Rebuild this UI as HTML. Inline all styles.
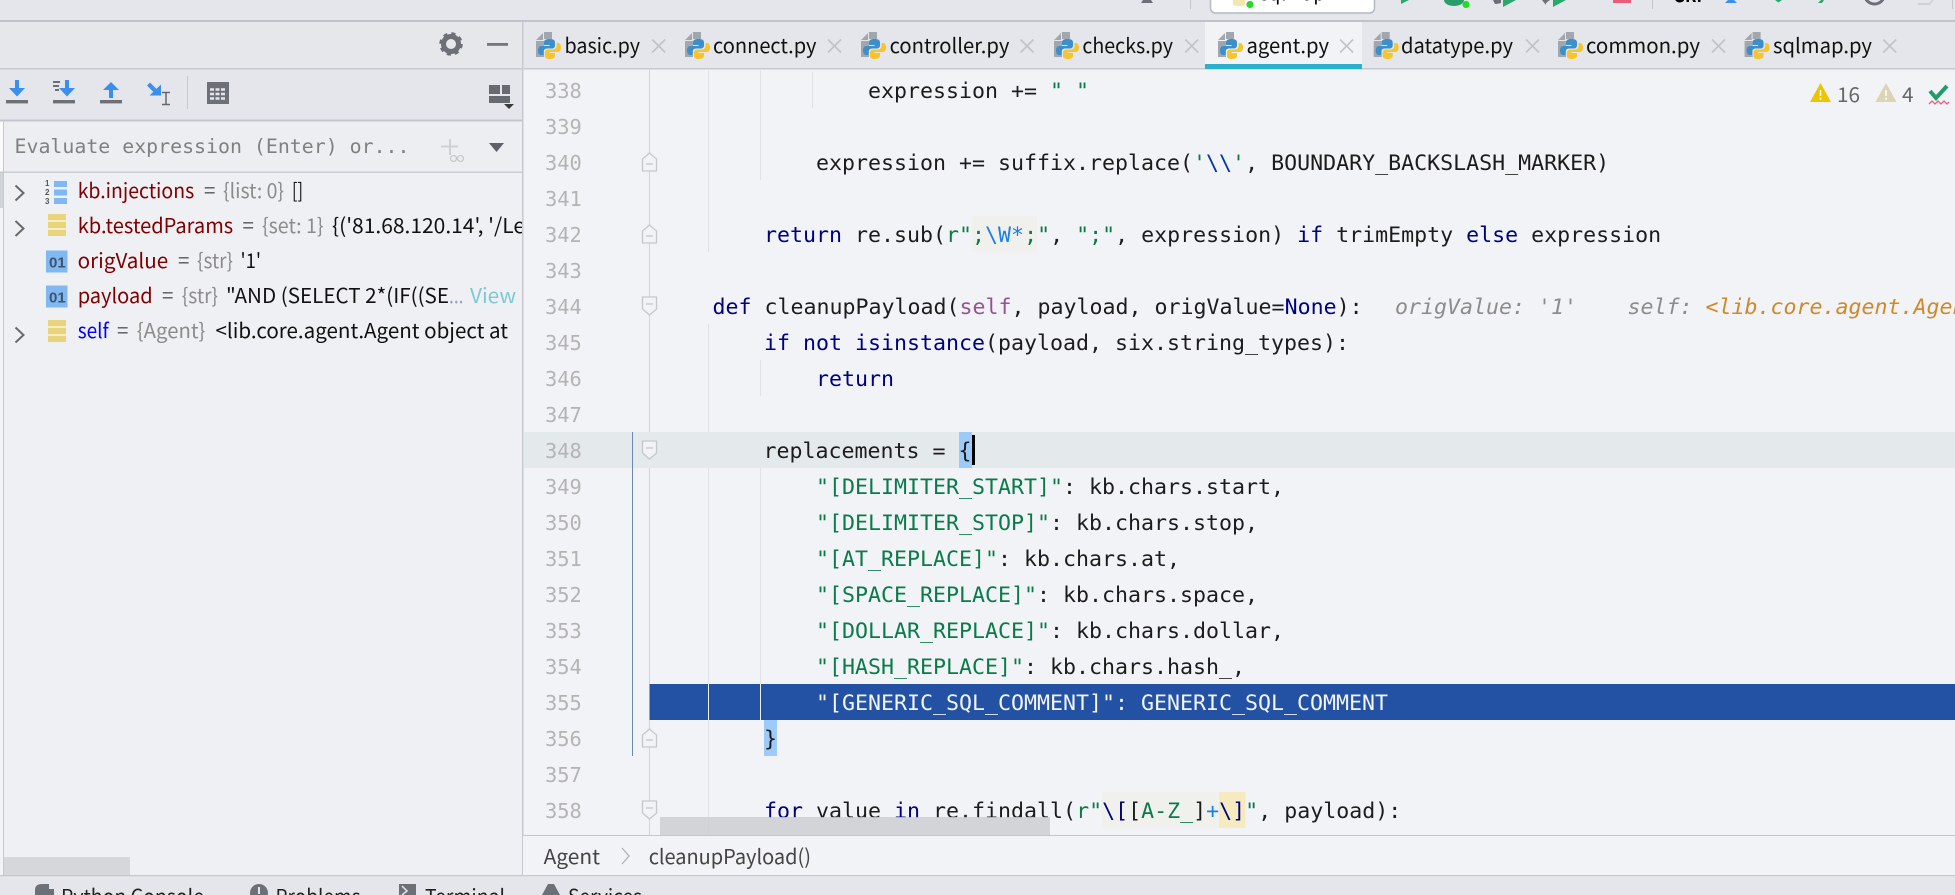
<!DOCTYPE html>
<html><head><meta charset="utf-8"><style>
html,body{margin:0;padding:0;width:1955px;height:895px;overflow:hidden;background:#e5e6eb}
svg{display:block}
text{white-space:pre}
.c{font:21.6px "DejaVu Sans Mono","Liberation Mono",monospace;fill:#1c1c1c}
.n{font:20.4px "DejaVu Sans Mono","Liberation Mono",monospace;fill:#b4b4b4}
.k{fill:#000080}.s{fill:#0a7a4a}.b{fill:#1a7fe8}.f{fill:#94558d}.e{fill:#0037a6}
.u{font:20.5px "Noto Sans CJK SC","Liberation Sans",sans-serif;fill:#111}
.r{fill:#7f0000}.g{fill:#8c8c8c}.q{fill:#555}
.w{font:19.8px "DejaVu Sans Mono","Liberation Mono",monospace;fill:#808080}
.h{font:italic 21.6px "DejaVu Sans Mono","Liberation Mono",monospace;fill:#8c8c8c}
</style></head><body>
<svg xmlns="http://www.w3.org/2000/svg" width="1955" height="895" viewBox="0 0 1955 895">
<defs>
<g id="py">
<path d="M0 8L7 1V8ZM8 0H16V7H8ZM0 9H8V25H0Z" fill="#a2a6ae"/>
<path d="M13.500 7c-4 0-5.500 1.300-5.500 3.500V13h5.500v1H5.500C3 14 2 16 2 18.500S3 23 5 23h2.500v-3c0-2 1.500-3.500 3.500-3.500h5c1.700 0 3-1.300 3-3V10.500C19 8.300 17.500 7 13.500 7z" fill="#3d8fcc"/>
<path d="M13.500 27c4 0 5.500-1.300 5.500-3.500V21h-5.500v-1h8c2.500 0 3.500-2 3.500-4.500S24 11 22 11h-1.500v3c0 2-1.500 3.500-3.500 3.500h-5c-1.700 0-3 1.300-3 3v3c0 2.200 1.500 3.500 4.500 3.500z" fill="#f6c52c"/>
</g>
<g id="x" stroke="#c0c3c8" stroke-width="1.600" fill="none"><path d="M-6.500-6.500L6.500 6.500M6.500-6.500L-6.500 6.500"/></g>
<g id="fs" fill="#f2f3f7" stroke="#c6c7cb" stroke-width="1.300"><path d="M-7-9H7V3L0 9L-7 3Z"/><path d="M-3.500-2H3.500" fill="none"/></g>
<g id="fe" fill="#f2f3f7" stroke="#c6c7cb" stroke-width="1.300"><path d="M-7 9H7V-3L0-9L-7-3Z"/><path d="M-3.500 2H3.500" fill="none"/></g>
<g id="ch" fill="none" stroke="#6a6a6a" stroke-width="2"><path d="M-4-7.500L4 0L-4 7.500"/></g>
<g id="st"><rect width="18" height="22" fill="#e9d47c"/><rect y="6" width="18" height="2" fill="#f4eec8"/><rect y="14" width="18" height="2" fill="#f4eec8"/></g>
<g id="nm"><rect width="21.500" height="22" fill="#82b8f1"/><text x="3" y="17" style="font:bold 15px 'Liberation Sans',sans-serif;fill:#3a5570">01</text></g>
</defs>

<rect width="1955" height="895" fill="#e5e6eb"/>

<!-- top bar -->
<path d="M1141 3L1143 0H1151L1153 3Z" fill="#6e6e78"/>
<rect x="1190" y="0" width="1" height="9" fill="#c4c6cc"/>
<rect x="1210.500" y="-6" width="164" height="19" rx="5" fill="#fff" stroke="#b4b9c2" stroke-width="1.500"/>
<path d="M1233 0H1245V5Q1240 7 1233 5Z" fill="#f5e6b0"/>
<circle cx="1250" cy="4.500" r="3.600" fill="#22dd22"/>
<text x="1260" y="0" textLength="65" lengthAdjust="spacingAndGlyphs" class="u" style="fill:#000">sqlmap</text>
<path d="M1401 0H1409L1401 4Z" fill="#2aa86a"/>
<ellipse cx="1454" cy="0" rx="10" ry="6" fill="#2a9d6a"/>
<circle cx="1466" cy="4.500" r="3.600" fill="#22dd22"/>
<path d="M1493 0H1501V3Q1497 4 1495 4Z" fill="#6e6e78"/><path d="M1503 0H1516L1503 7Z" fill="#2aa86a"/>
<path d="M1542 0H1550Q1545 3 1546 5Z" fill="#6e6e78"/><path d="M1553 0H1566L1553 7Z" fill="#2aa86a"/>
<rect x="1613" y="0" width="18" height="3" fill="#e85d7a"/>
<rect x="1652" y="0" width="1" height="9" fill="#c4c6cc"/>
<text x="1673" y="2" textLength="29" lengthAdjust="spacingAndGlyphs" class="u" style="fill:#000;font-weight:700">GRI</text>
<path d="M1725 3L1728 0H1734L1737 3Z" fill="#3a8ef0"/>
<path d="M1775 0H1782L1778.500 2.500Z" fill="#2aa86a"/><path d="M1818 3L1821 0H1824L1822 3Z" fill="#2aa86a"/>
<circle cx="1874.500" cy="-6" r="10" fill="none" stroke="#6e6e78" stroke-width="3"/>
<path d="M1918 3H1929L1932 0H1934L1930 5H1918Z" fill="#d0d1d5"/>
<rect x="1952" y="0" width="1" height="9" fill="#c4c6cc"/>
<rect x="0" y="20" width="1955" height="2" fill="#bfc4cb"/>

<!-- left panel -->
<rect x="0" y="22" width="522" height="47" fill="#e6e7eb"/>
<rect x="0" y="68" width="522" height="1.500" fill="#c6cad0"/>
<rect x="0" y="69.500" width="522" height="50" fill="#e5e6eb"/>
<rect x="0" y="119.500" width="522" height="2" fill="#c2c6cc"/>
<rect x="0" y="121.500" width="522" height="50" fill="#eceef2"/>
<rect x="0" y="171.500" width="522" height="2" fill="#c8ccd2"/>
<rect x="0" y="173" width="522" height="702" fill="#eff0f4"/>
<rect x="0" y="121.500" width="3" height="50" fill="#fbfbfc"/>
<rect x="0" y="173" width="3" height="35" fill="#d0d3d8"/>
<rect x="0" y="208" width="3" height="667" fill="#f2f3f6"/>
<rect x="3" y="121" width="1" height="754" fill="#c6c9cf"/>

<!-- gear & minus -->
<g transform="translate(451 44)"><circle r="7.500" fill="none" stroke="#6e7078" stroke-width="5"/><circle r="10" fill="none" stroke="#6e7078" stroke-width="3.500" stroke-dasharray="4 3.850"/></g>
<rect x="487" y="43" width="21" height="2.800" fill="#74767e"/>

<!-- toolbar icons -->
<path d="M15 80H19V88H25L17 96.500L9 88H15Z" fill="#3a8ef0"/><rect x="6" y="100" width="22" height="3.400" fill="#6e7078"/>
<path d="M53 81H60V83H53ZM53 85H59V87H53ZM55 89H59V91H55Z" fill="#6e7078"/>
<path d="M65 80H69V88H75L67 96.500L59 88H65Z" fill="#3a8ef0"/><rect x="53" y="100" width="22" height="3.400" fill="#6e7078"/>
<path d="M109 98V90H103L111 82L119 90H113V98Z" fill="#3a8ef0"/><rect x="100" y="100" width="22" height="3.400" fill="#6e7078"/>
<path d="M147 85.500L150 82.500L156.500 89L153.500 92ZM161 84.500V95.500H149.500Z" fill="#3a8ef0"/>
<path d="M162 92.500H170M162 104.500H170M166 92.500V104.500" fill="none" stroke="#666870" stroke-width="1.500"/>
<rect x="187" y="76" width="1" height="33" fill="#c6c8ce"/>
<rect x="207" y="82" width="22" height="22" fill="#6e7078"/>
<path d="M210 89.500H226M210 94H226M210 98.500H226" stroke="#e5e6eb" stroke-width="2.600" stroke-dasharray="4 1.500" fill="none"/>
<path d="M489 85H500V94H489ZM502 85H510V94H502ZM489 96H510V103H489Z" fill="#686a72"/>
<path d="M504 104H514L509 109Z" fill="#3a3a3a"/>

<!-- evaluate -->
<text x="14.500" y="153" class="w" textLength="395" lengthAdjust="spacingAndGlyphs">Evaluate expression (Enter) or...</text>
<path d="M449 139H451V145.500H458V147.500H451V155H449V147.500H441V145.500H449Z" fill="#cfd0d4"/>
<circle cx="453.500" cy="158.500" r="3" fill="none" stroke="#c8c9cd" stroke-width="1.300"/><circle cx="460.500" cy="158.500" r="3" fill="none" stroke="#c8c9cd" stroke-width="1.300"/>
<path d="M489 143H504L496.500 152Z" fill="#5f6168"/>

<!-- tree -->
<use href="#ch" x="19.500" y="193"/><use href="#ch" x="19.500" y="228.500"/><use href="#ch" x="19.500" y="335"/>
<text x="45" y="186" style="font:bold 8px 'Liberation Sans',sans-serif;fill:#555">1</text>
<text x="45" y="195" style="font:bold 8px 'Liberation Sans',sans-serif;fill:#555">2</text>
<text x="45" y="204" style="font:bold 8px 'Liberation Sans',sans-serif;fill:#555">3</text>
<path d="M54 181H67V187H54ZM54 189.500H67V195.500H54ZM54 198H67V204H54Z" fill="#7fb8f5"/>
<use href="#st" x="48" y="214"/><use href="#st" x="48" y="320"/>
<use href="#nm" x="46" y="250.500"/><use href="#nm" x="46" y="285.500"/>

<g class="u">
<text class="u" y="198"><tspan class="r" x="77.700" textLength="116.500" lengthAdjust="spacingAndGlyphs">kb.injections</tspan><tspan class="q" x="204">=</tspan><tspan class="g" x="223" textLength="61" lengthAdjust="spacingAndGlyphs">{list: 0}</tspan><tspan x="292" textLength="11" lengthAdjust="spacingAndGlyphs">[]</tspan></text>
<text class="u" y="233"><tspan class="r" x="77.700" textLength="155.500" lengthAdjust="spacingAndGlyphs">kb.testedParams</tspan><tspan class="q" x="242.500">=</tspan><tspan class="g" x="262" textLength="61.500" lengthAdjust="spacingAndGlyphs">{set: 1}</tspan><tspan x="332" textLength="193" lengthAdjust="spacingAndGlyphs">{('81.68.120.14', '/Le</tspan></text>
<text class="u" y="268"><tspan class="r" x="77.700" textLength="90.500" lengthAdjust="spacingAndGlyphs">origValue</tspan><tspan class="q" x="178">=</tspan><tspan class="g" x="197" textLength="36" lengthAdjust="spacingAndGlyphs">{str}</tspan><tspan x="240.500" textLength="20.500" lengthAdjust="spacingAndGlyphs">'1'</tspan></text>
<text class="u" y="303"><tspan class="r" x="77.700" textLength="75" lengthAdjust="spacingAndGlyphs">payload</tspan><tspan class="q" x="162">=</tspan><tspan class="g" x="181.800" textLength="36.200" lengthAdjust="spacingAndGlyphs">{str}</tspan><tspan x="226" textLength="223" lengthAdjust="spacingAndGlyphs">"AND (SELECT 2*(IF((SE</tspan><tspan style="fill:#8fa8b0" x="449" textLength="14.500" lengthAdjust="spacingAndGlyphs">...</tspan><tspan style="fill:#7ec8d6" x="470" textLength="46" lengthAdjust="spacingAndGlyphs">View</tspan></text>
<text class="u" y="338"><tspan style="fill:#0000ff" x="77.700" textLength="31" lengthAdjust="spacingAndGlyphs">self</tspan><tspan class="q" x="117">=</tspan><tspan class="g" x="136.800" textLength="68.600" lengthAdjust="spacingAndGlyphs">{Agent}</tspan><tspan x="215.500" textLength="292.500" lengthAdjust="spacingAndGlyphs">&lt;lib.core.agent.Agent object at</tspan></text>
</g>

<rect x="4" y="857" width="126" height="18" fill="#d6d7db"/>

<!-- editor -->
<rect x="523" y="69" width="1432" height="806" fill="#f2f3f7"/>
<rect x="522" y="22" width="1.500" height="853" fill="#c6c9cf"/>

<!-- tabs -->
<rect x="524" y="22" width="1431" height="46" fill="#e5e6eb"/>
<rect x="1205" y="22" width="157" height="42" fill="#f2f3f7"/>
<rect x="524" y="68" width="1431" height="1.500" fill="#c5c9d0"/>
<rect x="1205" y="64" width="157" height="5" fill="#2cb0d0"/>

<use href="#py" x="536" y="32"/><text class="u" x="564.500" y="53" textLength="75.500" lengthAdjust="spacingAndGlyphs">basic.py</text><use href="#x" x="658.700" y="46"/>
<use href="#py" x="685" y="32"/><text class="u" x="713" y="53" textLength="103.500" lengthAdjust="spacingAndGlyphs">connect.py</text><use href="#x" x="834.500" y="46"/>
<use href="#py" x="861" y="32"/><text class="u" x="889.600" y="53" textLength="119.800" lengthAdjust="spacingAndGlyphs">controller.py</text><use href="#x" x="1027" y="46"/>
<use href="#py" x="1054" y="32"/><text class="u" x="1082.400" y="53" textLength="90.600" lengthAdjust="spacingAndGlyphs">checks.py</text><use href="#x" x="1191.700" y="46"/>
<use href="#py" x="1218" y="32"/><text class="u" x="1246.500" y="53" textLength="82.500" lengthAdjust="spacingAndGlyphs">agent.py</text><use href="#x" x="1346.600" y="46"/>
<use href="#py" x="1373.700" y="32"/><text class="u" x="1401" y="53" textLength="112" lengthAdjust="spacingAndGlyphs">datatype.py</text><use href="#x" x="1532.500" y="46"/>
<use href="#py" x="1558" y="32"/><text class="u" x="1586" y="53" textLength="114" lengthAdjust="spacingAndGlyphs">common.py</text><use href="#x" x="1718.500" y="46"/>
<use href="#py" x="1744.600" y="32"/><text class="u" x="1773" y="53" textLength="99" lengthAdjust="spacingAndGlyphs">sqlmap.py</text><use href="#x" x="1889.700" y="46"/>

<!-- highlights -->
<rect x="524" y="432" width="1431" height="36" fill="#e4e9ec"/>
<rect x="959" y="432" width="13" height="36" fill="#9ccbfa"/>
<rect x="764" y="720" width="13" height="36" fill="#9ccbfa"/>
<rect x="972" y="216" width="65" height="36" fill="#f0f0ed"/>
<rect x="1102" y="792" width="117" height="36" fill="#f0f0ed"/>
<rect x="1219" y="792" width="26.500" height="36" fill="#f6ebbe"/>
<rect x="649.500" y="684" width="1305.500" height="36" fill="#2352a5"/>

<!-- guides -->
<path d="M649.500 69V432M649.500 468V684M649.500 720V835" stroke="#d2d3d7" stroke-width="1" fill="none"/>
<path d="M708.500 69V252M708.500 324V432M708.500 468V684M708.500 720V835" stroke="#e0e1e5" stroke-width="1" fill="none"/>
<path d="M760.500 69V180M760.500 360V396M760.500 468V684" stroke="#e0e1e5" stroke-width="1" fill="none"/>
<path d="M812.500 72V108" stroke="#e0e1e5" stroke-width="1" fill="none"/>
<path d="M708.500 684V720M760.500 684V720" stroke="#eef0f6" stroke-width="1" fill="none"/>
<path d="M632.500 432V756" stroke="#6a8ab4" stroke-width="1" fill="none"/>
<use href="#fe" x="649.500" y="162"/><use href="#fe" x="649.500" y="234"/><use href="#fs" x="649.500" y="306"/>
<use href="#fs" x="649.500" y="450"/><use href="#fe" x="649.500" y="738"/><use href="#fs" x="649.500" y="810"/>

<!-- line numbers -->
<g class="n">
<text class="n" x="545" y="98">338</text><text class="n" x="545" y="134">339</text><text class="n" x="545" y="170">340</text><text class="n" x="545" y="206">341</text><text class="n" x="545" y="242">342</text><text class="n" x="545" y="278">343</text><text class="n" x="545" y="314">344</text><text class="n" x="545" y="350">345</text><text class="n" x="545" y="386">346</text><text class="n" x="545" y="422">347</text><text class="n" x="545" y="458">348</text><text class="n" x="545" y="494">349</text><text class="n" x="545" y="530">350</text><text class="n" x="545" y="566">351</text><text class="n" x="545" y="602">352</text><text class="n" x="545" y="638">353</text><text class="n" x="545" y="674">354</text><text class="n" x="545" y="710">355</text><text class="n" x="545" y="746">356</text><text class="n" x="545" y="782">357</text><text class="n" x="545" y="818">358</text>
</g>

<!-- code -->
<text class="c" x="868" y="98">expression += <tspan class="s">" "</tspan></text>
<text class="c" x="816" y="170">expression += suffix.replace(<tspan class="s">'</tspan><tspan class="e">\\</tspan><tspan class="s">'</tspan>, BOUNDARY_BACKSLASH_MARKER)</text>
<text class="c" x="764" y="242"><tspan class="k">return</tspan> re.sub(<tspan class="s">r";</tspan><tspan class="b">\W*</tspan><tspan class="s">;"</tspan>, <tspan class="s">";"</tspan>, expression) <tspan class="k">if</tspan> trimEmpty <tspan class="k">else</tspan> expression</text>
<text class="c" x="712.500" y="314"><tspan class="k">def</tspan> cleanupPayload(<tspan class="f">self</tspan>, payload, origValue=<tspan class="k">None</tspan>):</text>
<text class="h" x="1395" y="314">origValue: '1'</text>
<text class="h" x="1627.500" y="314">self: <tspan style="fill:#d0882a">&lt;lib.core.agent.Agent object</tspan></text>
<text class="c" x="764" y="350"><tspan class="k">if not isinstance</tspan>(payload, six.string_types):</text>
<text class="c k" x="816" y="386">return</text>
<text class="c" x="763.500" y="458">replacements = {</text>
<rect x="972" y="435" width="3" height="30" fill="#000"/>
<text class="c" x="816" y="494"><tspan class="s">"[DELIMITER_START]"</tspan>: kb.chars.start,</text>
<text class="c" x="816" y="530"><tspan class="s">"[DELIMITER_STOP]"</tspan>: kb.chars.stop,</text>
<text class="c" x="816" y="566"><tspan class="s">"[AT_REPLACE]"</tspan>: kb.chars.at,</text>
<text class="c" x="816" y="602"><tspan class="s">"[SPACE_REPLACE]"</tspan>: kb.chars.space,</text>
<text class="c" x="816" y="638"><tspan class="s">"[DOLLAR_REPLACE]"</tspan>: kb.chars.dollar,</text>
<text class="c" x="816" y="674"><tspan class="s">"[HASH_REPLACE]"</tspan>: kb.chars.hash_,</text>
<text class="c" x="816" y="710" style="fill:#f2f4f8">"[GENERIC_SQL_COMMENT]": GENERIC_SQL_COMMENT</text>
<text class="c" x="764" y="746">}</text>
<text class="c" x="764" y="818"><tspan class="k">for</tspan> value <tspan class="k">in</tspan> re.findall(<tspan class="s">r"</tspan><tspan class="k">\[</tspan>[<tspan class="s">A-Z_</tspan>]<tspan class="b">+</tspan><tspan class="k">\]</tspan><tspan class="s">"</tspan>, payload):</text>

<!-- warnings -->
<path d="M1820.500 83L1831 102H1810Z" fill="#eec400"/><path d="M1820.500 90V96M1820.500 97.500V100" stroke="#fff" stroke-width="1.500"/>
<text class="u" x="1837" y="102" textLength="23" lengthAdjust="spacingAndGlyphs" style="fill:#666">16</text>
<path d="M1886 83L1896.500 102H1875.500Z" fill="#dcd4b4"/><path d="M1886 90V96M1886 97.500V100" stroke="#fff" stroke-width="1.500"/>
<text class="u" x="1902" y="102" textLength="11.500" lengthAdjust="spacingAndGlyphs" style="fill:#666">4</text>
<path d="M1930 91L1936 98L1947 86" fill="none" stroke="#1f9d6c" stroke-width="4"/>
<path d="M1929 104L1932 101L1935 104L1938 101L1941 104L1944 101L1947 104L1949 102" fill="none" stroke="#e8607a" stroke-width="1.300"/>

<!-- editor scrollbar -->
<rect x="660" y="817" width="390" height="18" fill="#cdced2" fill-opacity=".85"/>

<!-- breadcrumb -->
<rect x="523" y="835" width="1432" height="40" fill="#f2f3f7"/>
<rect x="523" y="835" width="1432" height="1" fill="#c6c7cb"/>
<text class="u" x="543.600" y="864" textLength="56.400" lengthAdjust="spacingAndGlyphs" style="fill:#444">Agent</text>
<path d="M622 848L629 856L622 864" fill="none" stroke="#b0b2b6" stroke-width="1.300"/>
<text class="u" x="648.700" y="864" textLength="162.300" lengthAdjust="spacingAndGlyphs" style="fill:#444">cleanupPayload()</text>

<!-- bottom bar -->
<rect x="0" y="875" width="1955" height="20" fill="#e5e6eb"/>
<rect x="0" y="875" width="1955" height="1.200" fill="#c6c7cb"/>
<path d="M35 895V890Q35 884 42 884H49V889H54V895Z" fill="#6e7078"/><text class="u" x="61" y="904" textLength="143" lengthAdjust="spacingAndGlyphs" style="fill:#222">Python Console</text>
<circle cx="259" cy="893" r="9" fill="#6e7078"/><rect x="258" y="887" width="2" height="7" fill="#e5e6eb"/><text class="u" x="275.500" y="904" textLength="85" lengthAdjust="spacingAndGlyphs" style="fill:#222">Problems</text>
<rect x="399" y="884" width="17" height="11" fill="#6e7078"/><path d="M402 886L407 891L402 895" fill="none" stroke="#e5e6eb" stroke-width="1.500"/><text class="u" x="425" y="904" textLength="80" lengthAdjust="spacingAndGlyphs" style="fill:#222">Terminal</text>
<path d="M542 895L548 884H554L560 895Z" fill="#6e7078"/><text class="u" x="568" y="904" textLength="74" lengthAdjust="spacingAndGlyphs" style="fill:#222">Services</text>
</svg>
</body></html>
